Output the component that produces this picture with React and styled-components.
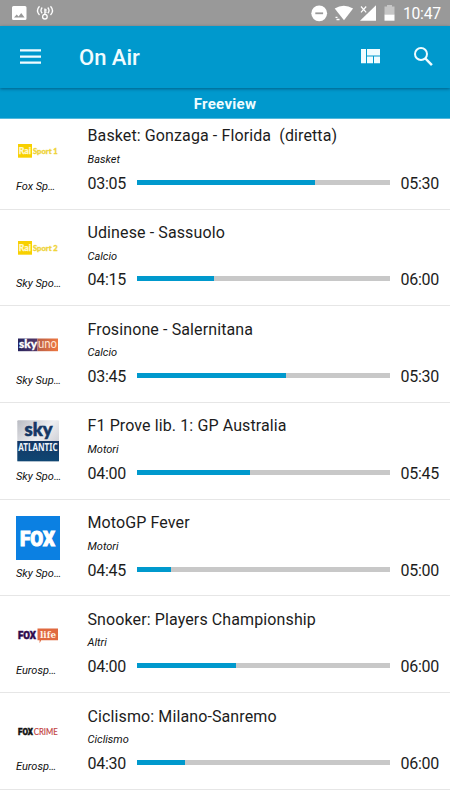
import React from "react"
import styled, { createGlobalStyle } from "styled-components"

const GlobalStyle = createGlobalStyle`
  html, body {
    margin: 0;
    background: #fff;
    overflow: hidden;
  }
  * {
    box-sizing: border-box;
  }
`

const Screen = styled.div`
  display: flex;
  flex-direction: column;
  width: 450px;
  height: 800px;
  overflow: hidden;
  background: #fff;
  color: #1c1c1c;
  font-family: Roboto, sans-serif;
`

const StatusBar = styled.div`
  display: flex;
  flex: none;
  justify-content: space-between;
  height: 26px;
  background: #999;
  color: #fff;
`

const AppBar = styled.header`
  display: flex;
  flex: none;
  align-items: center;
  height: 62px;
  padding: 0 17px 0 20px;
  background: #0099cd;
  color: #effcff;
  box-shadow: 0 1px 3px rgba(0, 40, 70, 0.5);
  z-index: 2;
`

const AppTitle = styled.h1`
  flex: 1;
  margin: 2px 0 0 38px;
  font-size: 22px;
  font-weight: 500;
  line-height: 26px;
`

const Category = styled.div`
  flex: none;
  height: 31px;
  background: #0099cd;
  border-bottom: 1px solid #52b9dc;
  color: #effcff;
  font-size: 15px;
  font-weight: 700;
  letter-spacing: 0.3px;
  line-height: 33px;
  text-align: center;
  z-index: 1;
`

const List = styled.div`
  flex: 1;
  margin-top: -6.2px;
`

const Row = styled.div`
  display: flex;
  height: 96.7px;
  padding: 0 11px 0 16px;
  border-bottom: 1px solid #e6e6e6;
`

const Channel = styled.div`
  flex: none;
  width: 44px;
  margin-right: 27.5px;
  padding-top: 16.4px;
`

const LogoBox = styled.div`
  width: 44px;
  height: 44px;

  svg {
    display: block;
  }
`

const ChannelName = styled.div`
  margin-top: 7px;
  font-size: 11px;
  font-style: italic;
  line-height: 14px;
  white-space: nowrap;
  color: #111;
`

const Program = styled.div`
  flex: 1;
  padding-top: 13.6px;
`

const ProgramTitle = styled.div`
  font-size: 16px;
  letter-spacing: 0.11px;
  line-height: 20px;
  white-space: pre;
`

const Genre = styled.div`
  margin-top: 6.5px;
  font-size: 11px;
  font-style: italic;
  line-height: 14px;
  color: #111;
`

const Timeline = styled.div`
  display: flex;
  align-items: center;
  margin-top: 6.9px;
  font-size: 16px;
  line-height: 20px;
`

const Time = styled.span`
  width: 39px;
  letter-spacing: -0.25px;
`

const Track = styled.div`
  width: 253px;
  height: 5px;
  margin: -3px 10.5px 0;
  background: #c8c8c8;
`

const Elapsed = styled.div`
  height: 5px;
  background: #0099cd;
`

const LeftStatus = () => (
  <svg width="70" height="26" fill="#fff">
    <path fillRule="evenodd" d="M13.5 6h11.500q1.500 0 1.500 1.500v11q0 1.500-1.500 1.500h-11.500q-1.500 0-1.500-1.500v-11q0-1.500 1.500-1.500zM14 17.600h10.600l-3.400-4.600-2.600 3.400-1.900-2z" />
    <g fill="none" stroke="#fff" strokeWidth="1.300">
      <path d="M39.500 6.200q-4 4.300 0 8.800M42.200 7.500q-2.500 3 0 5.800M50.500 6.200q4 4.300 0 8.800M47.800 7.500q2.500 3 0 5.800" />
      <circle cx="44.900" cy="16.700" r="2.300" />
      <path d="M44.900 14.500V8.500M44.900 10h1.800M44.900 12.200h1.800" />
    </g>
  </svg>
)

const RightStatus = () => (
  <svg width="145" height="26" fill="#fff">
    <circle cx="14.200" cy="13.300" r="7.900" />
    <path d="M10.300 12.400h7.800v1.800h-7.800z" fill="#999" />
    <path d="M29.700 8.600q9-5.700 18.400 0L39 20.300z" />
    <path d="M29 15.500h5l2 5.500h-7z" fill="#999" />
    <path d="M30.500 16.700h2v1.200h-2zM31.500 18.800h3v1.500h-3z" />
    <path d="M71 5.300v15.500H55z" />
    <path d="M54.800 5.300h7.400v8h-7.400z" fill="#999" />
    <path d="M56 6.500l5.200 5.800M61.200 6.500L56 12.300" stroke="#fff" strokeWidth="1.200" />
    <path d="M82 5h5v1.500h2.500V15h-10V6.500H82z" fill="#c6c6c6" />
    <path d="M79.500 14.700h10v6h-10z" />
    <text x="98" y="19.300" fontFamily="Roboto, sans-serif" fontSize="15.700" textLength="38">10:47</text>
  </svg>
)

const MenuIcon = () => (
  <svg width="21" height="16" fill="#effcff">
    <path d="M0 0.300h21v2.200H0zM0 6.500h21v2.200H0zM0 12.600h21v2.200H0z" />
  </svg>
)

const QuiltIcon = () => (
  <svg width="19" height="16" fill="#effcff">
    <path d="M0 0h5v14.200H0zM6 0H19v6.500H6zM6 7.500h6v6.700H6zM13 7.500h6v6.700h-6z" />
  </svg>
)

const SearchIcon = styled.svg`
  margin-left: 33px;
`

const Logo = ({ name }) => (
  <svg width="44" height="44" viewBox="0 0 44 44">
    {name.startsWith("rai") && (
      <g fontFamily="Lato, sans-serif" fontWeight="900">
        <rect x="2" y="15" width="14" height="13.700" fill="#f8d000" />
        <text x="2.700" y="24.900" fontSize="8.500" textLength="12.300" lengthAdjust="spacingAndGlyphs" stroke="#fff9d2" strokeWidth="0.250" fill="#fff9d2">Rai</text>
        <text x="17" y="24.900" fontSize="7.500" textLength="24.700" lengthAdjust="spacingAndGlyphs" stroke="#efd43b" strokeWidth="0.350" fill="#efd43b">Sport {name.slice(3)}</text>
      </g>
    )}
    {name === "uno" && (
      <g fontFamily="Lato, sans-serif">
        <defs>
          <linearGradient id="unoLeft">
            <stop offset="0" stopColor="#26245e" />
            <stop offset="1" stopColor="#563868" />
          </linearGradient>
          <linearGradient id="unoRight">
            <stop offset="0" stopColor="#b96048" />
            <stop offset="1" stopColor="#ee7740" />
          </linearGradient>
        </defs>
        <rect x="2" y="15.500" width="19.500" height="12.700" fill="url(#unoLeft)" />
        <rect x="21.500" y="15.500" width="20.500" height="12.700" fill="url(#unoRight)" />
        <text x="3" y="25" fontSize="11.500" fontWeight="900" textLength="18" lengthAdjust="spacingAndGlyphs" stroke="#fff" strokeWidth="0.300" fill="#fff">sky</text>
        <text x="22" y="25.300" fontSize="13" textLength="19" lengthAdjust="spacingAndGlyphs" fill="#ffe5d4">uno</text>
      </g>
    )}
    {name === "atlantic" && (
      <g>
        <defs>
          <linearGradient id="atlTop" x1="0" y1="0" x2="1" y2="1">
            <stop offset="0" stopColor="#b9bbc2" />
            <stop offset="0.450" stopColor="#eeeef1" />
            <stop offset="1" stopColor="#b8bac2" />
          </linearGradient>
          <linearGradient id="atlBottom" x1="0" y1="0" x2="0" y2="1">
            <stop offset="0" stopColor="#143764" />
            <stop offset="1" stopColor="#0f4673" />
          </linearGradient>
        </defs>
        <rect x="1.300" y="1.300" width="41.700" height="41" rx="1" fill="url(#atlTop)" />
        <rect x="1.300" y="22" width="41.700" height="20.300" fill="url(#atlBottom)" />
        <text x="8.500" y="16.500" fontFamily="Lato, sans-serif" fontSize="18.500" fontWeight="900" textLength="28" lengthAdjust="spacingAndGlyphs" stroke="#153765" strokeWidth="0.600" fill="#153765">sky</text>
        <text x="2.300" y="31.500" fontFamily="Noto Sans, sans-serif" fontSize="9.800" fontWeight="700" textLength="39.300" lengthAdjust="spacingAndGlyphs" fill="#edf3fb">ATLANTIC</text>
      </g>
    )}
    {name === "fox" && (
      <g>
        <rect width="44" height="44" fill="#0b80e2" />
        <text x="4" y="29.500" fontFamily="Roboto, sans-serif" fontSize="20.500" fontWeight="900" stroke="#fff" strokeWidth="1" textLength="35" lengthAdjust="spacingAndGlyphs" fill="#fff">FOX</text>
      </g>
    )}
    {name === "life" && (
      <g>
        <path d="M21.500 15.500H42v11.700H25.200l-1.600 3v-3h-2.100z" fill="#e0693f" />
        <text x="2" y="25.500" fontFamily="Roboto, sans-serif" fontSize="11" fontWeight="900" stroke="#300a4c" strokeWidth="0.500" textLength="18" lengthAdjust="spacingAndGlyphs" fill="#300a4c">FOX</text>
        <text x="24" y="25.200" fontFamily="DejaVu Serif, serif" fontSize="10" fontWeight="700" textLength="16" lengthAdjust="spacingAndGlyphs" fill="#fff3e8">life</text>
      </g>
    )}
    {name === "crime" && (
      <g>
        <text x="2" y="25.600" fontFamily="Roboto, sans-serif" fontSize="9.500" fontWeight="900" stroke="#111" strokeWidth="0.500" textLength="15" lengthAdjust="spacingAndGlyphs" fill="#111">FOX</text>
        <text x="17.700" y="25.600" fontFamily="Lato, sans-serif" fontSize="9.500" textLength="24" lengthAdjust="spacingAndGlyphs" stroke="#c2413e" strokeWidth="0.200" fill="#c2413e">CRIME</text>
      </g>
    )}
  </svg>
)

const programs = [
  { logo: "rai1", channel: "Fox Sp…", title: "Basket: Gonzaga - Florida  (diretta)", genre: "Basket", start: "03:05", end: "05:30", elapsed: 70.4 },
  { logo: "rai2", channel: "Sky Spo…", title: "Udinese - Sassuolo", genre: "Calcio", start: "04:15", end: "06:00", elapsed: 30.5 },
  { logo: "uno", channel: "Sky Sup…", title: "Frosinone - Salernitana", genre: "Calcio", start: "03:45", end: "05:30", elapsed: 59 },
  { logo: "atlantic", channel: "Sky Spo…", title: "F1 Prove lib. 1: GP Australia", genre: "Motori", start: "04:00", end: "05:45", elapsed: 44.7 },
  { logo: "fox", channel: "Sky Spo…", title: "MotoGP Fever", genre: "Motori", start: "04:45", end: "05:00", elapsed: 13.4 },
  { logo: "life", channel: "Eurosp…", title: "Snooker: Players Championship", genre: "Altri", start: "04:00", end: "06:00", elapsed: 39.2 },
  { logo: "crime", channel: "Eurosp…", title: "Ciclismo: Milano-Sanremo", genre: "Ciclismo", start: "04:30", end: "06:00", elapsed: 19 },
]

const App = () => (
  <Screen>
    <GlobalStyle />
    <StatusBar>
      <LeftStatus />
      <RightStatus />
    </StatusBar>
    <AppBar>
      <MenuIcon />
      <AppTitle>On Air</AppTitle>
      <QuiltIcon />
      <SearchIcon width="20" height="20" fill="none" stroke="#effcff">
        <circle cx="8" cy="7" r="6" strokeWidth="2" />
        <path d="M12.400 11.500l6.500 6.700" strokeWidth="2.500" />
      </SearchIcon>
    </AppBar>
    <Category>Freeview</Category>
    <List>
      {programs.map(p => (
        <Row key={p.logo}>
          <Channel>
            <LogoBox>
              <Logo name={p.logo} />
            </LogoBox>
            <ChannelName>{p.channel}</ChannelName>
          </Channel>
          <Program>
            <ProgramTitle>{p.title}</ProgramTitle>
            <Genre>{p.genre}</Genre>
            <Timeline>
              <Time>{p.start}</Time>
              <Track>
                <Elapsed style={{ width: `${p.elapsed}%` }} />
              </Track>
              <Time>{p.end}</Time>
            </Timeline>
          </Program>
        </Row>
      ))}
    </List>
  </Screen>
)

export default App
